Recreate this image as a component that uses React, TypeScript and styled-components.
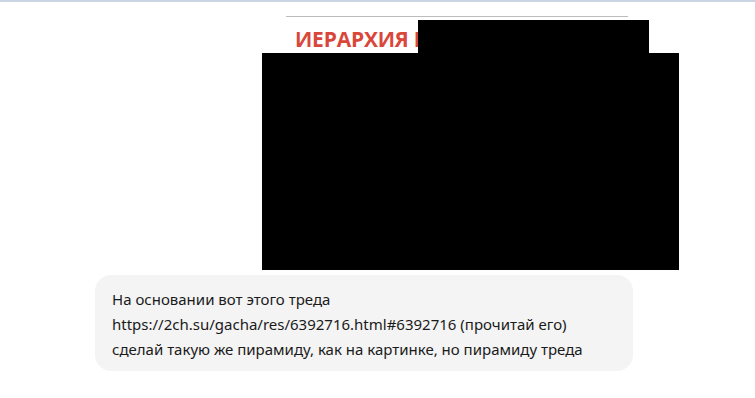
import React from "react";
import styled, { createGlobalStyle } from "styled-components";

const Global = createGlobalStyle`
  html, body { margin: 0; padding: 0; background: #ffffff; }
  body { font-family: "Noto Sans", "Open Sans", sans-serif; }
`;

const Page = styled.div`
  width: 755px;
  height: 398px;
  display: flex;
  flex-direction: column;
  overflow: hidden;
`;

const TopBar = styled.div`
  height: 2px;
  background: #c9d4e4;
  flex: none;
`;

const Picture = styled.div`
  margin-left: 262px;
  width: 417px;
  height: 268px;
  background: #ffffff;
  display: flex;
  flex-direction: column;
  flex: none;
`;

const Rule = styled.div`
  margin: 14px 0 0 24px;
  width: 342px;
  height: 1px;
  background: #bcbcbc;
`;

const HeaderRow = styled.div`
  margin-top: 3px;
  height: 33px;
  display: flex;
  align-items: stretch;
`;

const Title = styled.div`
  width: 123px;
  padding-left: 33px;
  overflow: hidden;
  white-space: nowrap;
  font-family: "Open Sans", "Noto Sans", sans-serif;
  font-weight: 700;
  font-size: 21px;
  letter-spacing: -0.2px;
  line-height: 28px;
  padding-top: 5px;
  color: #d9473a;
  box-sizing: content-box;
`;

const Redaction = styled.div<{ $w: number; $h: number }>`
  width: ${(p) => p.$w}px;
  height: ${(p) => p.$h}px;
  background: #000000;
  flex: none;
`;

const Bubble = styled.div`
  margin: 5px 0 0 95px;
  width: 504px;
  padding: 12px 17px 9px;
  background: #f4f4f4;
  border-radius: 16px;
  font-size: 15px;
  line-height: 25px;
  color: #1a1a1a;
  flex: none;
`;

const Line = styled.div`
  white-space: nowrap;
`;

export default function App() {
  return (
    <Page>
      <Global />
      <TopBar />
      <Picture>
        <Rule />
        <HeaderRow>
          <Title>ИЕРАРХИЯ П</Title>
          <Redaction $w={231} $h={33} />
        </HeaderRow>
        <Redaction $w={417} $h={217} />
      </Picture>
      <Bubble>
        <Line>На основании вот этого треда</Line>
        <Line>https://2ch.su/gacha/res/6392716.html#6392716 (прочитай его)</Line>
        <Line>сделай такую же пирамиду, как на картинке, но пирамиду треда</Line>
      </Bubble>
    </Page>
  );
}
